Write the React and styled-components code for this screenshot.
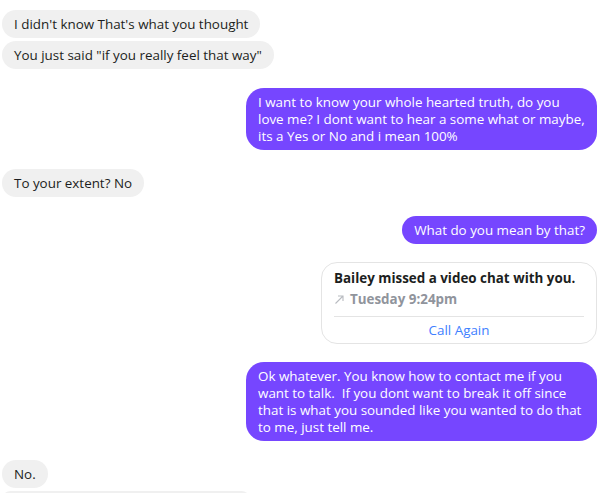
import React from "react";
import styled, { createGlobalStyle } from "styled-components";

const GlobalStyle = createGlobalStyle`
  body {
    margin: 0;
    background: #fff;
    font-family: "Open Sans", "Noto Sans", sans-serif;
    overflow: hidden;
  }
`;

const Thread = styled.div`
  display: flex;
  flex-direction: column;
  padding: 10px 19px 0 2px;
  height: 493px;
  box-sizing: border-box;
  overflow: hidden;
`;

const Group = styled.div`
  display: flex;
  flex-direction: column;
  align-items: ${(props) => (props.mine ? "flex-end" : "flex-start")};
  gap: 3px;
  margin-bottom: ${(props) => props.after || 19}px;
`;

const Bubble = styled.div`
  max-width: 327px;
  min-height: 17px;
  padding: 6px 12px 5px;
  font-size: 13.4px;
  line-height: 17px;
  border-radius: ${(props) => (props.multi ? "18px" : "14px")};
  background: ${(props) => (props.mine ? "#7646ff" : "#f0f0f0")};
  color: ${(props) => (props.mine ? "#fff" : "#1c1e21")};
  white-space: pre-wrap;
  ${(props) => props.width && `width: ${props.width}px; box-sizing: border-box;`}
`;

const Card = styled.div`
  width: 276px;
  box-sizing: border-box;
  border: 1px solid #e4e4e4;
  border-radius: 16px;
  padding: 6px 12px 4px;
`;

const CardTitle = styled.div`
  font-size: 13.4px;
  font-weight: 700;
  color: #1c1e21;
  line-height: 18px;
`;

const CardTime = styled.div`
  display: flex;
  align-items: center;
  gap: 5px;
  font-size: 13.4px;
  font-weight: 700;
  color: #90949c;
  line-height: 20px;
  margin-top: 2px;
`;

const Divider = styled.div`
  height: 1px;
  background: #e4e4e4;
  margin: 7px 0 4px;
`;

const CallAgain = styled.div`
  text-align: center;
  font-size: 13.4px;
  color: #4080ff;
  line-height: 18px;
`;

const Arrow = () => (
  <svg width="11" height="11" viewBox="0 0 11 11">
    <path d="M1.5 9.5 L9 2 M4 2 H9 V7" stroke="#b8bbc0" strokeWidth="1.1" fill="none" />
  </svg>
);

export default function App() {
  return (
    <>
      <GlobalStyle />
      <Thread>
        <Group>
          <Bubble>I didn't know That's what you thought</Bubble>
          <Bubble>You just said "if you really feel that way"</Bubble>
        </Group>
        <Group mine>
          <Bubble mine multi>
            I want to know your whole hearted truth, do you love me? I dont want to hear a some what or maybe, its a Yes or No and i mean 100%
          </Bubble>
        </Group>
        <Group>
          <Bubble>To your extent? No</Bubble>
        </Group>
        <Group mine after={18}>
          <Bubble mine>What do you mean by that?</Bubble>
        </Group>
        <Group mine after={18}>
          <Card>
            <CardTitle>Bailey missed a video chat with you.</CardTitle>
            <CardTime>
              <Arrow />
              Tuesday 9:24pm
            </CardTime>
            <Divider />
            <CallAgain>Call Again</CallAgain>
          </Card>
        </Group>
        <Group mine>
          <Bubble mine multi>
            {"Ok whatever. You know how to contact me if you want to talk.  If you dont want to break it off since that is what you sounded like you wanted to do that to me, just tell me."}
          </Bubble>
        </Group>
        <Group>
          <Bubble>No.</Bubble>
          <Bubble width={248} />
        </Group>
      </Thread>
    </>
  );
}
